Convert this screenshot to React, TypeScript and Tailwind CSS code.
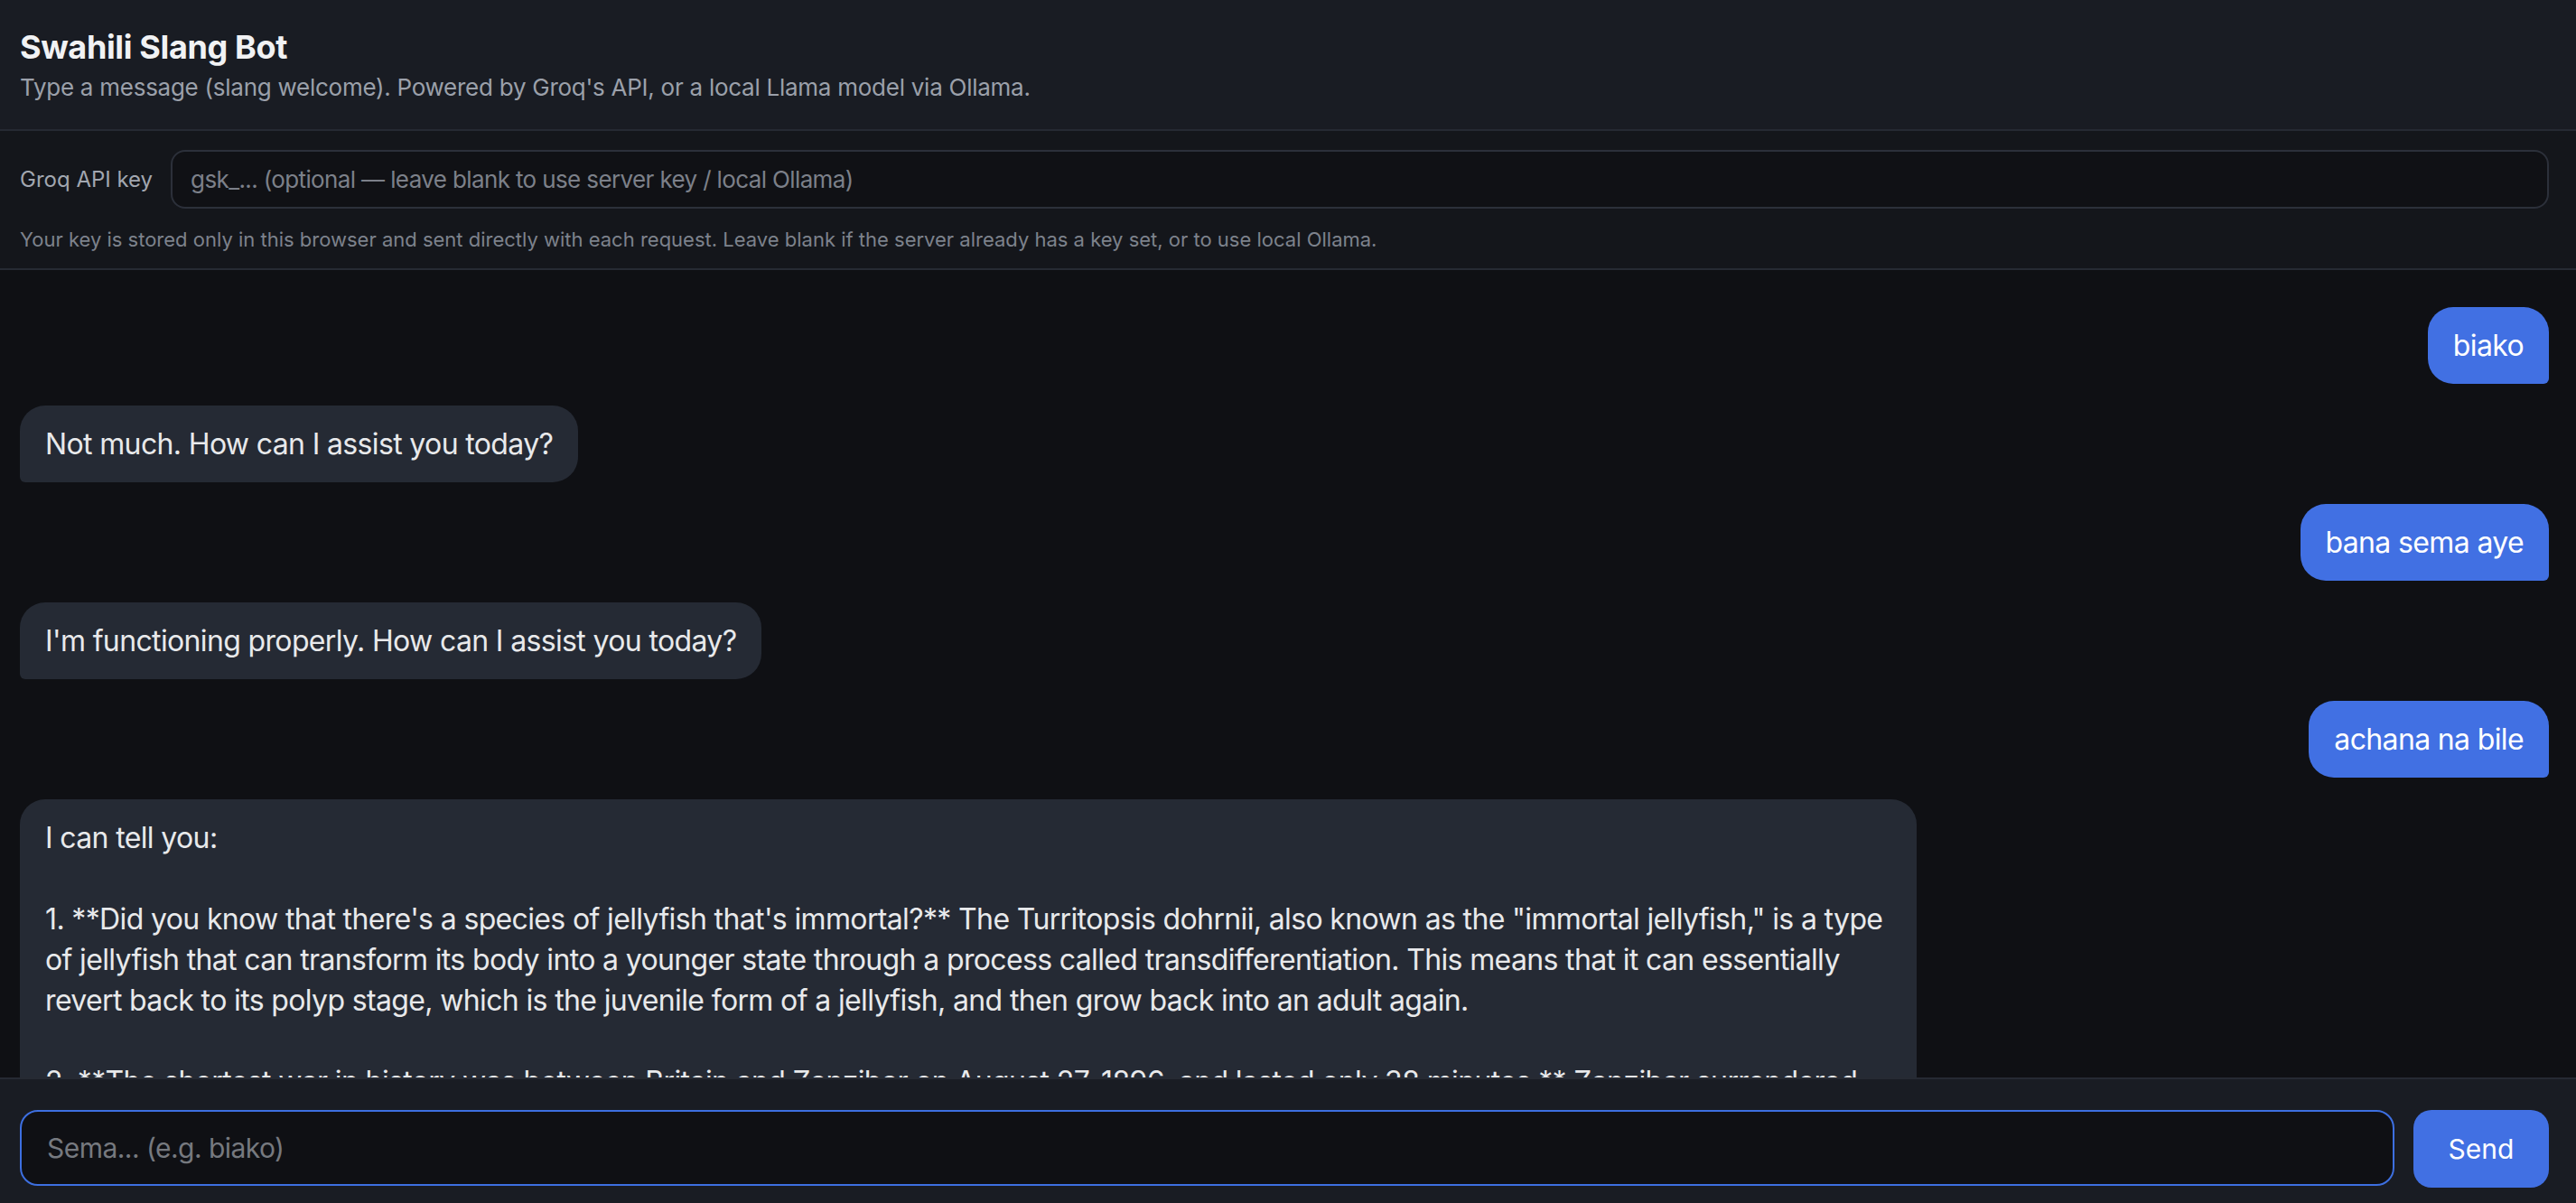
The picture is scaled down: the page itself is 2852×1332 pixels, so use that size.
import { useState } from 'react';

interface Msg {
  role: 'user' | 'bot';
  text: string;
}

const messages: Msg[] = [
  { role: 'user', text: 'biako' },
  { role: 'bot', text: 'Not much. How can I assist you today?' },
  { role: 'user', text: 'bana sema aye' },
  { role: 'bot', text: "I'm functioning properly. How can I assist you today?" },
  { role: 'user', text: 'achana na bile' },
  {
    role: 'bot',
    text:
      'I can tell you:\n\n' +
      '1. **Did you know that there\'s a species of jellyfish that\'s immortal?** The Turritopsis dohrnii, also known as the "immortal jellyfish," is a type of jellyfish that can transform its body into a younger state through a process called transdifferentiation. This means that it can essentially revert back to its polyp stage, which is the juvenile form of a jellyfish, and then grow back into an adult again.\n\n' +
      '2. **The shortest war in history was between Britain and Zanzibar on August 27, 1896, and lasted only 38 minutes.** Zanzibar surrendered after a short bombardment by the Royal Navy.\n\n' +
      '3. **Honey never spoils.** Archaeologists have found pots of honey in ancient Egyptian tombs that are over 3,000 years old and still edible.',
  },
];

export default function App() {
  const [apiKey, setApiKey] = useState('');
  const [draft, setDraft] = useState('');

  return (
    <div className="flex h-screen flex-col bg-[#0f1014] font-['Inter','Noto_Sans',sans-serif] text-[#e6e7ea]">
      {/* Header */}
      <header className="border-b-2 border-[#262a33] bg-[#191c23] pt-[30px] pb-[28px] pl-[22px] pr-[30px]">
        <h1 className="text-[36px] font-bold leading-[44px] tracking-[-0.01em] text-[#f1f2f4]">Swahili Slang Bot</h1>
        <p className="mt-[5px] text-[26px] leading-[36px] tracking-[-0.01em] text-[#9ba0aa]">
          Type a message (slang welcome). Powered by Groq's API, or a local Llama model via Ollama.
        </p>
      </header>

      {/* API key */}
      <section className="border-b-2 border-[#262a33] bg-[#14161b] pt-[21px] pb-[17px] pl-[22px] pr-[30px]">
        <div className="flex items-center gap-[20px]">
          <label className="shrink-0 text-[24px] text-[#a2a7b0]">Groq API key</label>
          <input
            value={apiKey}
            onChange={(e) => setApiKey(e.target.value)}
            placeholder="gsk_... (optional — leave blank to use server key / local Ollama)"
            className="h-[65px] flex-1 rounded-[16px] border-2 border-[#2c303a] bg-[#101115] px-[20px] text-[26px] tracking-[-0.024em] text-[#e6e7ea] outline-none placeholder:text-[#7c8089]"
          />
        </div>
        <p className="mt-[19px] text-[22px] leading-[30px] text-[#7d828c]">
          Your key is stored only in this browser and sent directly with each request. Leave blank if the server already
          has a key set, or to use local Ollama.
        </p>
      </section>

      {/* Chat */}
      <main className="flex flex-1 flex-col gap-[24px] overflow-y-auto pt-[41px] pb-[24px] pl-[22px] pr-[30px] [scrollbar-width:none]">
        {messages.map((m, i) => (
          <div key={i} className={m.role === 'user' ? 'flex justify-end' : 'flex justify-start'}>
            <div
              className={[
                'max-w-[75%] whitespace-pre-wrap px-[28px] py-[20px] text-[32px] leading-[45px] tracking-[-0.02em]',
                m.role === 'user'
                  ? 'rounded-[28px] rounded-br-[6px] bg-[#4170e3] text-white'
                  : 'rounded-[28px] rounded-bl-[6px] bg-[#252a34] text-[#e8e9eb]',
              ].join(' ')}
            >
              {m.text}
            </div>
          </div>
        ))}
      </main>

      {/* Composer */}
      <footer className="flex gap-[21px] border-t-2 border-[#262a33] bg-[#191c23] pt-[34px] pb-[17px] pl-[22px] pr-[30px]">
        <input
          autoFocus
          value={draft}
          onChange={(e) => setDraft(e.target.value)}
          placeholder="Sema... (e.g. biako)"
          className="h-[84px] flex-1 rounded-[20px] border-2 border-[#3d6fe0] bg-[#0f1014] px-[28px] text-[30px] tracking-[-0.018em] text-[#e6e7ea] outline-none placeholder:text-[#76797f]"
        />
        <button className="h-[86px] w-[150px] rounded-[20px] bg-[#4170e3] text-[30px] text-white">Send</button>
      </footer>
    </div>
  );
}
